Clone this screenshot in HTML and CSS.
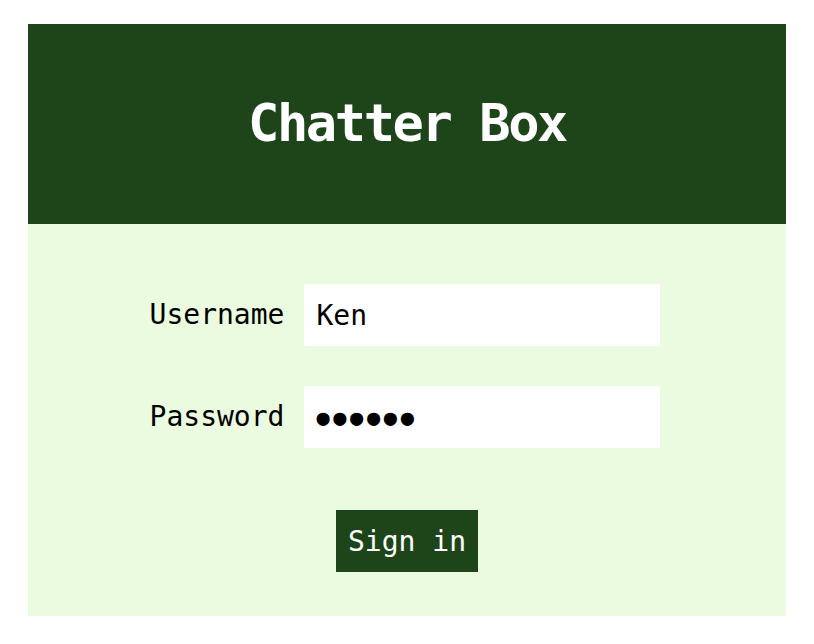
FILE: index.html
```html
<!DOCTYPE html>
<html lang="en">
<head>
<meta charset="utf-8">
<title>Chatter Box</title>
<link rel="stylesheet" href="styles.css">
</head>
<body>
<main class="card">
  <header class="card-header">
    <h1 class="title">Chatter Box</h1>
  </header>
  <form class="login-form">
    <div class="fields">
      <label class="field-label" for="username">Username</label>
      <input class="field-input" id="username" type="text" value="Ken">
      <label class="field-label" for="password">Password</label>
      <input class="field-input field-password" id="password" type="text" value="●●●●●●">
    </div>
    <button class="sign-in" type="button">Sign in</button>
  </form>
</main>
</body>
</html>
```
FILE: styles.css
```css
html, body {
  margin: 0;
  padding: 0;
  background: #ffffff;
}

body {
  font-family: "DejaVu Sans Mono", "Liberation Mono", monospace;
}

.card {
  margin: 24px 28px 28px;
  background: #ebfbdf;
}

.card-header {
  background: #1e4519;
  height: 200px;
  display: flex;
  align-items: center;
  justify-content: center;
}

.title {
  margin: 0;
  color: #ffffff;
  font-size: 52px;
  font-weight: bold;
  letter-spacing: -2.4px;
  line-height: 1;
  padding-bottom: 2px;
}

.login-form {
  display: flex;
  flex-direction: column;
  align-items: center;
  padding: 60px 0 44px;
}

.fields {
  display: grid;
  grid-template-columns: auto 356px;
  column-gap: 20px;
  row-gap: 40px;
  align-items: center;
  margin-right: 4px;
}

.field-label {
  font-size: 28px;
  color: #000000;
  line-height: 1;
}

.field-input {
  box-sizing: border-box;
  width: 356px;
  height: 62px;
  border: none;
  outline: none;
  background: #ffffff;
  padding: 0 12px;
  font-family: inherit;
  font-size: 28px;
  color: #000000;
}

.field-password {
  font-size: 22px;
  letter-spacing: 3.6px;
}

.sign-in {
  margin-top: 62px;
  height: 62px;
  padding: 0 12px;
  border: none;
  background: #1e4519;
  color: #ffffff;
  font-family: inherit;
  font-size: 28px;
  cursor: pointer;
}
```
